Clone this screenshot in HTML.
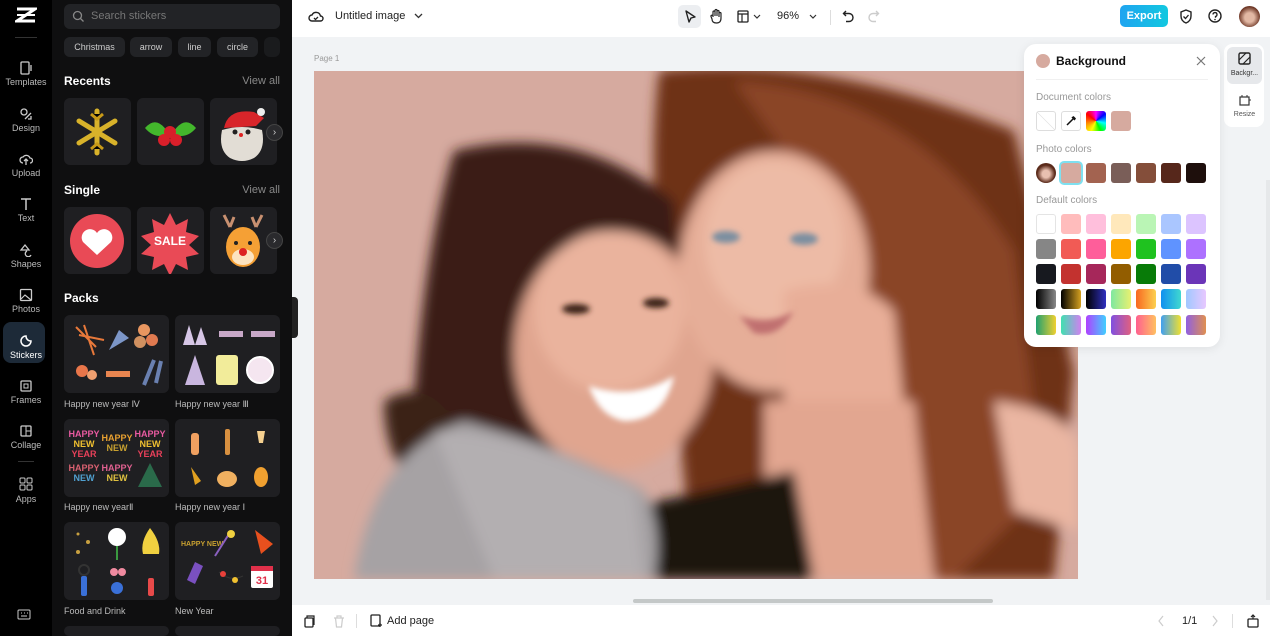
<!DOCTYPE html>
<html><head><meta charset="utf-8">
<style>
*{margin:0;padding:0;box-sizing:border-box}
html{width:1270px;height:636px;overflow:hidden}
body{width:1270px;height:636px;overflow:hidden;font-family:"Liberation Sans",sans-serif;background:#f1f3f5;position:relative}
.a{position:absolute}
#nav{left:0;top:0;width:52px;height:636px;background:#000;overflow:hidden}
.ni{position:absolute;left:0;width:52px;text-align:center;color:#bbb;font-size:9px}
.ni svg{display:block;margin:0 auto 2px}
#panel{left:52px;top:0;width:240px;height:636px;background:#0f0f10;color:#fff;overflow:hidden}
.chip{position:absolute;top:37px;height:20px;border-radius:6px;background:#222326;color:#ccc;font-size:9px;line-height:20px;text-align:center}
.h{position:absolute;font-size:12px;font-weight:bold;color:#fff}
.va{position:absolute;right:12px;font-size:11px;color:#888}
.card{position:absolute;width:67px;height:67px;border-radius:6px;background:#1f1f22;overflow:hidden}
.pk{position:absolute;width:105px;height:78px;border-radius:6px;background:#1f1f22;overflow:hidden}
.pl{position:absolute;font-size:9px;color:#bbb}
.arr{position:absolute;width:17px;height:17px;border-radius:50%;background:#2a2a2d;border:1px solid #444;color:#ccc;font-size:10px;line-height:15px;text-align:center}
#top{left:292px;top:0;width:978px;height:37px;background:#fff}
#bot{left:292px;top:605px;width:978px;height:31px;background:#fff}
.sw{position:absolute;width:20px;height:20px;border-radius:3px}
.lbl{position:absolute;left:12px;font-size:10px;color:#999}
</style></head><body>

<div id="nav" class="a">
  <svg class="a" style="left:15px;top:7px" width="22" height="16" viewBox="0 0 22 16"><path d="M2 2h18L2 14h18" stroke="#fff" stroke-width="3" fill="none"/><path d="M2 8h18" stroke="#fff" stroke-width="2"/></svg>
  <div class="a" style="left:15px;top:37px;width:22px;height:1px;background:#333"></div>
  <div class="ni" style="top:61px"><svg width="14" height="14"><rect x="2" y="1" width="8" height="12" rx="1" stroke="#ccc" fill="none" stroke-width="1.3"/><path d="M12 4v6" stroke="#ccc" stroke-width="1.3"/></svg>Templates</div>
  <div class="ni" style="top:107px"><svg width="14" height="14"><circle cx="5" cy="5" r="3" stroke="#ccc" fill="none" stroke-width="1.3"/><path d="M6 12l6-6M9 12h3V9" stroke="#ccc" fill="none" stroke-width="1.3"/></svg>Design</div>
  <div class="ni" style="top:152px"><svg width="14" height="14"><path d="M4 11a3 3 0 0 1 0-6 4 4 0 0 1 7 1 2.5 2.5 0 0 1 0 5M7 13V7M5 9l2-2 2 2" stroke="#ccc" fill="none" stroke-width="1.3"/></svg>Upload</div>
  <div class="ni" style="top:197px"><svg width="14" height="14"><path d="M2 2h10M7 2v11" stroke="#ccc" stroke-width="1.5"/></svg>Text</div>
  <div class="ni" style="top:243px"><svg width="14" height="14"><path d="M2 7l4-5 4 5zM8 8a3 3 0 1 0 4 4" stroke="#ccc" fill="none" stroke-width="1.3"/></svg>Shapes</div>
  <div class="ni" style="top:288px"><svg width="14" height="14"><rect x="1.5" y="1.5" width="11" height="11" rx="1" stroke="#ccc" fill="none" stroke-width="1.3"/><path d="M2 11l4-4 6 5" stroke="#ccc" fill="none" stroke-width="1.2"/></svg>Photos</div>
  <div class="a" style="left:3px;top:322px;width:42px;height:41px;border-radius:8px;background:#1d2a38"></div>
  <div class="ni" style="top:334px;color:#fff"><svg width="14" height="14"><path d="M12 7A5 5 0 1 1 7 2c0 3 2 5 5 5z" stroke="#fff" fill="none" stroke-width="1.5"/></svg>Stickers</div>
  <div class="ni" style="top:379px"><svg width="14" height="14"><rect x="2" y="2" width="10" height="10" rx="1" stroke="#ccc" fill="none" stroke-width="1.3"/><rect x="5" y="5" width="4" height="4" stroke="#ccc" fill="none"/></svg>Frames</div>
  <div class="ni" style="top:424px"><svg width="14" height="14"><rect x="2" y="2" width="10" height="10" rx="1" stroke="#ccc" fill="none" stroke-width="1.3"/><path d="M7 2v10M7 7h5" stroke="#ccc"/></svg>Collage</div>
  <div class="a" style="left:18px;top:461px;width:16px;height:1px;background:#333"></div>
  <div class="ni" style="top:476px"><svg width="16" height="16"><rect x="2" y="2" width="5" height="5" rx="1" stroke="#ccc" fill="none"/><rect x="9" y="2" width="5" height="5" rx="1" stroke="#ccc" fill="none"/><rect x="2" y="9" width="5" height="5" rx="1" stroke="#ccc" fill="none"/><rect x="9" y="9" width="5" height="5" rx="1" stroke="#ccc" fill="none"/></svg>Apps</div>
  <svg class="a" style="left:17px;top:609px" width="14" height="12"><rect x="1" y="1" width="12" height="9" rx="1" stroke="#ccc" fill="none"/><path d="M4 7h6M4 4h1M7 4h1M10 4h1" stroke="#ccc"/></svg>
</div>

<div id="panel" class="a">
  <div class="a" style="left:12px;top:4px;width:216px;height:25px;border-radius:6px;background:#222326"></div>
  <svg class="a" style="left:20px;top:10px" width="13" height="13"><circle cx="5.5" cy="5.5" r="4" stroke="#888" fill="none" stroke-width="1.3"/><path d="M8.5 8.5l3 3" stroke="#888" stroke-width="1.3"/></svg>
  <div class="a" style="left:39px;top:10px;font-size:11px;color:#777">Search stickers</div>
  <div class="chip" style="left:12px;width:61px">Christmas</div>
  <div class="chip" style="left:78px;width:42px">arrow</div>
  <div class="chip" style="left:126px;width:33px">line</div>
  <div class="chip" style="left:165px;width:41px">circle</div>
  <div class="chip" style="left:212px;width:16px;opacity:.6"></div>

  <div class="h" style="left:12px;top:74px">Recents</div><div class="va" style="top:75px">View all</div>
  <div class="card" style="left:12px;top:98px"><svg width="67" height="67"><g stroke="#d8b22a" stroke-width="5" stroke-linecap="round"><path d="M33 13v42M15 23l36 22M15 45l36-22"/></g><g stroke="#c89a18" stroke-width="3"><path d="M27 16l6 5 6-5M27 51l6-5 6 5"/></g></svg></div>
  <div class="card" style="left:85px;top:98px"><svg width="67" height="67"><path d="M8 30q12-14 24 6q-14 6-24-6zM59 30q-12-14-24 6q14 6 24-6z" fill="#43b72c"/><circle cx="33" cy="34" r="6" fill="#d91f2a"/><circle cx="27" cy="42" r="6" fill="#d91f2a"/><circle cx="39" cy="42" r="6" fill="#d91f2a"/></svg></div>
  <div class="card" style="left:158px;top:98px"><svg width="67" height="67"><path d="M14 30q4-20 30-16l10 6-8 8z" fill="#d8252a"/><circle cx="51" cy="14" r="4" fill="#eee"/><path d="M12 32q20-6 40 0q4 20-8 28q-12 6-24 0q-12-8-8-28z" fill="#e2ddd5"/><circle cx="25" cy="34" r="2.5" fill="#222"/><circle cx="38" cy="34" r="2.5" fill="#222"/><circle cx="31" cy="37" r="2" fill="#d22"/></svg></div>
  <div class="arr" style="left:214px;top:124px">›</div>

  <div class="h" style="left:12px;top:183px">Single</div><div class="va" style="top:184px">View all</div>
  <div class="card" style="left:12px;top:207px"><svg width="67" height="67"><circle cx="33" cy="34" r="27" fill="#e94a56"/><path d="M33 48l-14-13a8 8 0 0 1 14-9a8 8 0 0 1 14 9z" fill="#fff"/></svg></div>
  <div class="card" style="left:85px;top:207px"><svg width="67" height="67"><path d="M33 6l6 12 12-6-2 13 13 4-10 9 10 9-13 3 2 13-12-6-6 12-6-12-12 6 2-13-13-3 10-9-10-9 13-4-2-13 12 6z" fill="#e94a56"/><text x="33" y="38" font-size="12" font-weight="bold" fill="#fff" text-anchor="middle" font-family="Liberation Sans">SALE</text></svg></div>
  <div class="card" style="left:158px;top:207px"><svg width="67" height="67"><path d="M20 20l-6-12M20 20l4-10M46 20l6-12M46 20l-4-10" stroke="#c89070" stroke-width="3"/><ellipse cx="33" cy="40" rx="17" ry="20" fill="#f5a035"/><ellipse cx="33" cy="50" rx="11" ry="8" fill="#fde4c0"/><circle cx="33" cy="45" r="4" fill="#d22"/><circle cx="26" cy="36" r="2" fill="#222"/><circle cx="40" cy="36" r="2" fill="#222"/></svg></div>
  <div class="arr" style="left:214px;top:232px">›</div>

  <div class="h" style="left:12px;top:291px">Packs</div>
  <div class="pk" style="left:12px;top:315px"><svg width="105" height="78"><path d="M20 10l10 30M15 20l25 5M12 12l20 20" stroke="#e7783a" stroke-width="2"/><path d="M45 35l10-20 10 8z" fill="#7c96c8"/><circle cx="80" cy="15" r="6" fill="#e89660"/><circle cx="88" cy="25" r="6" fill="#e07a50"/><circle cx="76" cy="27" r="6" fill="#d09060"/><circle cx="18" cy="56" r="6" fill="#e9764a"/><circle cx="28" cy="60" r="5" fill="#f0a070"/><rect x="42" y="56" width="24" height="6" fill="#e88550"/><path d="M80 70l10-25M92 68l5-22" stroke="#6a80b0" stroke-width="4"/></svg></div>
  <div class="pk" style="left:123px;top:315px"><svg width="105" height="78"><path d="M8 30l6-20 6 20z" fill="#d6c6e6"/><path d="M20 30l6-18 6 18z" fill="#d6c6e6"/><rect x="44" y="16" width="24" height="6" fill="#c8a8c8"/><rect x="76" y="16" width="24" height="6" fill="#c8a8c8"/><path d="M10 70l10-30 10 30z" fill="#c9b6df"/><rect x="41" y="40" width="22" height="30" rx="3" fill="#f2ec9a"/><circle cx="85" cy="55" r="13" fill="#f5e6f0" stroke="#fff" stroke-width="2"/></svg></div>
  <div class="pl" style="left:12px;top:399px">Happy new year Ⅳ</div>
  <div class="pl" style="left:123px;top:399px">Happy new year Ⅲ</div>
  <div class="pk" style="left:12px;top:419px"><svg width="105" height="78"><g font-family="Liberation Sans" font-size="9" font-weight="bold" text-anchor="middle"><text x="20" y="18" fill="#e85aa0">HAPPY</text><text x="20" y="28" fill="#f0c030">NEW</text><text x="20" y="38" fill="#e8405a">YEAR</text><text x="53" y="22" fill="#e8a030">HAPPY</text><text x="53" y="32" fill="#c8a030">NEW</text><text x="86" y="18" fill="#e85aa0">HAPPY</text><text x="86" y="28" fill="#f0c030">NEW</text><text x="86" y="38" fill="#e8405a">YEAR</text><text x="20" y="52" fill="#d86070">HAPPY</text><text x="20" y="62" fill="#50a0d0">NEW</text><text x="53" y="52" fill="#e06090">HAPPY</text><text x="53" y="62" fill="#e0c040">NEW</text></g><path d="M86 44l12 24h-24z" fill="#2a6a4a"/></svg></div>
  <div class="pk" style="left:123px;top:419px"><svg width="105" height="78"><rect x="16" y="14" width="8" height="22" rx="3" fill="#f0a060"/><rect x="50" y="10" width="5" height="26" rx="2" fill="#d89040"/><path d="M82 12h8l-2 12h-4z" fill="#f5d090"/><path d="M16 48l10 14-6 4z" fill="#e0a020"/><ellipse cx="52" cy="60" rx="10" ry="8" fill="#f0b060"/><ellipse cx="86" cy="58" rx="7" ry="10" fill="#f0a030"/></svg></div>
  <div class="pl" style="left:12px;top:502px">Happy new yearⅡ</div>
  <div class="pl" style="left:123px;top:502px">Happy new year Ⅰ</div>
  <div class="pk" style="left:12px;top:522px"><svg width="105" height="78"><circle cx="14" cy="12" r="1.5" fill="#c8a040"/><circle cx="24" cy="20" r="2" fill="#c8a040"/><circle cx="14" cy="30" r="2" fill="#c8a040"/><circle cx="53" cy="15" r="9" fill="#fff"/><path d="M53 24v14" stroke="#3a9a40" stroke-width="2"/><path d="M86 6q-10 14-7 26h16q2-12-9-26z" fill="#f0d040"/><rect x="17" y="54" width="6" height="20" rx="2" fill="#3a70d8"/><circle cx="20" cy="48" r="5" fill="none" stroke="#333" stroke-width="2"/><circle cx="53" cy="66" r="6" fill="#3a70d8"/><circle cx="50" cy="50" r="4" fill="#f08aa0"/><circle cx="58" cy="50" r="4" fill="#f08aa0"/><rect x="84" y="56" width="6" height="18" rx="2" fill="#e84a4a"/></svg></div>
  <div class="pk" style="left:123px;top:522px"><svg width="105" height="78"><text x="6" y="24" font-size="7" font-weight="bold" fill="#c8a030" font-family="Liberation Sans">HAPPY NEW</text><path d="M40 34l14-22" stroke="#8a60c0" stroke-width="2"/><circle cx="56" cy="12" r="4" fill="#f0d040"/><path d="M80 8l18 14-12 10z" fill="#e8501e"/><path d="M12 58l8-18 8 4-8 18z" fill="#7a50c0"/><path d="M44 50q10 10 24 4" stroke="#333" fill="none"/><circle cx="48" cy="52" r="3" fill="#e8403a"/><circle cx="60" cy="58" r="3" fill="#f0c030"/><rect x="76" y="44" width="22" height="22" rx="2" fill="#fff"/><rect x="76" y="44" width="22" height="5" fill="#e0304a"/><text x="87" y="62" font-size="11" font-weight="bold" fill="#e0304a" text-anchor="middle" font-family="Liberation Sans">31</text></svg></div>
  <div class="pl" style="left:12px;top:606px">Food and Drink</div>
  <div class="pl" style="left:123px;top:606px">New Year</div>
  <div class="pk" style="left:12px;top:626px;height:10px"></div>
  <div class="pk" style="left:123px;top:626px;height:10px"></div>
</div>
<div class="a" style="left:292px;top:297px;width:6px;height:41px;background:#222;border-radius:0 4px 4px 0"></div>

<div id="top" class="a">
  <svg class="a" style="left:16px;top:9px" width="16" height="16"><path d="M4 12a3 3 0 0 1 0-6 4.5 4.5 0 0 1 8.5 1 2.5 2.5 0 0 1 0 5z" stroke="#222" fill="none" stroke-width="1.4"/><path d="M6 9l1.5 1.5L10 8" stroke="#222" fill="none" stroke-width="1.3"/></svg>
  <div class="a" style="left:43px;top:10px;font-size:11px;color:#222">Untitled image</div>
  <svg class="a" style="left:122px;top:13px" width="9" height="6"><path d="M1 1l3.5 3.5L8 1" stroke="#333" fill="none" stroke-width="1.3"/></svg>
  <div class="a" style="left:386px;top:5px;width:23px;height:23px;border-radius:5px;background:#eceef1"></div>
  <svg class="a" style="left:391px;top:9px" width="14" height="15"><path d="M3 2l9 6-4 1-2 4z" stroke="#222" fill="none" stroke-width="1.4" stroke-linejoin="round"/></svg>
  <svg class="a" style="left:417px;top:8px" width="14" height="16"><path d="M4 9V4a1 1 0 0 1 2 0v4V2.5a1 1 0 0 1 2 0V8V3.5a1 1 0 0 1 2 0V9V5.5a1 1 0 0 1 2 0V10q0 5-4.5 5T3 11L2 8.5a1 1 0 0 1 2-.5z" stroke="#222" fill="none" stroke-width="1.2"/></svg>
  <svg class="a" style="left:445px;top:10px" width="12" height="13"><rect x="1" y="1" width="10" height="11" rx="1" stroke="#222" fill="none" stroke-width="1.3"/><path d="M1 4h10M5 4v8" stroke="#222" stroke-width="1.2"/></svg>
  <svg class="a" style="left:461px;top:14px" width="8" height="5"><path d="M1 1l3 3 3-3" stroke="#333" fill="none" stroke-width="1.2"/></svg>
  <div class="a" style="left:485px;top:10px;font-size:11px;color:#222">96%</div>
  <svg class="a" style="left:517px;top:14px" width="8" height="5"><path d="M1 1l3 3 3-3" stroke="#333" fill="none" stroke-width="1.2"/></svg>
  <div class="a" style="left:538px;top:10px;width:1px;height:15px;background:#ddd"></div>
  <svg class="a" style="left:550px;top:9px" width="13" height="14"><path d="M4 2L1.5 4.5 4 7M2 4.5h5a4 4 0 0 1 0 8H4" stroke="#222" fill="none" stroke-width="1.4"/></svg>
  <svg class="a" style="left:575px;top:9px" width="13" height="14"><path d="M9 2l2.5 2.5L9 7M11 4.5H6a4 4 0 0 0 0 8h3" stroke="#ccc" fill="none" stroke-width="1.4"/></svg>
  <div class="a" style="left:828px;top:5px;width:48px;height:22px;border-radius:5px;background:linear-gradient(90deg,#1fa4f0,#12c8e0);color:#fff;font-size:11px;font-weight:bold;text-align:center;line-height:22px">Export</div>
  <svg class="a" style="left:887px;top:9px" width="14" height="15"><path d="M7 1l5 2v4q0 5-5 7q-5-2-5-7V3z" stroke="#222" fill="none" stroke-width="1.4"/><path d="M4.5 7.5l2 2 3-3.5" stroke="#222" fill="none" stroke-width="1.3"/></svg>
  <svg class="a" style="left:916px;top:9px" width="14" height="14"><circle cx="7" cy="7" r="6" stroke="#222" fill="none" stroke-width="1.4"/><path d="M5 5.5a2 2 0 1 1 2.5 2v1.3" stroke="#222" fill="none" stroke-width="1.3"/><circle cx="7" cy="10.5" r=".8" fill="#222"/></svg>
  <div class="a" style="left:947px;top:6px;width:21px;height:21px;border-radius:50%;background:radial-gradient(circle at 50% 55%,#e2b8a4 30%,#6a3322 70%)"></div>
</div>

<div class="a" style="left:314px;top:54px;font-size:8px;color:#999">Page 1</div>

<svg class="a" style="left:314px;top:71px" width="764" height="508" viewBox="0 0 764 508">
<defs><filter id="b" x="-20%" y="-20%" width="140%" height="140%"><feGaussianBlur stdDeviation="6"/></filter><filter id="b2"><feGaussianBlur stdDeviation="3"/></filter></defs>
<rect width="764" height="508" fill="#d6aa9f"/>
<g filter="url(#b)">
<path d="M345 0 Q500 -20 700 60 L760 300 L740 508 L380 508 L360 300 Q330 120 345 0z" fill="#6e3019"/>
<path d="M420 10 Q600 20 700 180 L730 420 L640 508 L500 508 Q560 300 520 150z" fill="#8a4426"/>
<path d="M140 80 Q260 50 360 130 L380 360 L200 400 L100 330 Q110 180 140 80z" fill="#3a1c14"/>
<path d="M70 330 Q120 300 150 370 L120 430 Q70 400 70 330z" fill="#3a2218"/>
<ellipse cx="300" cy="280" rx="100" ry="120" fill="#e0a58f"/>
<ellipse cx="295" cy="240" rx="75" ry="80" fill="#eab39d"/>
<ellipse cx="460" cy="200" rx="95" ry="120" fill="#e6ae98"/>
<ellipse cx="460" cy="170" rx="70" ry="80" fill="#edbba6"/>
<path d="M470 220 Q540 200 580 240 L590 340 L520 380 L470 340z" fill="#e8ae98"/>
<path d="M450 330 L600 330 L620 508 L450 508z" fill="#e2a690"/>
<path d="M680 330 Q760 340 764 380 L764 460 L700 440z" fill="#eab6a2"/>
<path d="M300 440 L480 400 L500 508 L310 508z" fill="#1a1210"/>
<path d="M40 508 Q60 380 150 350 Q260 380 330 420 Q350 460 340 508z" fill="#a6a2a4"/>
<path d="M120 360 Q200 360 320 420 L330 508 L180 508z" fill="#b3afb1"/>
</g>
<g filter="url(#b2)">
<ellipse cx="262" cy="238" rx="14" ry="5" fill="#3a2018"/>
<ellipse cx="342" cy="232" rx="13" ry="5" fill="#3a2018"/>
<ellipse cx="412" cy="166" rx="14" ry="6" fill="#7a8ea0"/>
<ellipse cx="490" cy="168" rx="14" ry="6" fill="#7a8ea0"/>
<path d="M275 315 Q320 330 360 305 Q350 350 310 350 Q285 345 275 315z" fill="#fff"/>
<path d="M425 245 Q455 255 480 240 Q465 268 440 262z" fill="#c07070"/>
</g>
</svg>

<div class="a" style="left:633px;top:599px;width:360px;height:4px;border-radius:2px;background:#c4c8c8"></div>
<div class="a" style="left:1266px;top:180px;width:4px;height:420px;background:#e6e8ea"></div>

<div class="a" style="left:1224px;top:44px;width:40px;height:83px;border-radius:8px;background:#fff"></div>
<div class="a" style="left:1227px;top:47px;width:35px;height:37px;border-radius:6px;background:#e6e8eb"></div>
<svg class="a" style="left:1238px;top:52px" width="13" height="13"><rect x="1" y="1" width="11" height="11" rx="1.5" stroke="#222" fill="none" stroke-width="1.4"/><path d="M1 8l7-7M5 12l7-7" stroke="#222" stroke-width="1.2"/></svg>
<div class="a" style="left:1227px;top:70px;width:35px;text-align:center;font-size:7px;color:#333">Backgr...</div>
<svg class="a" style="left:1238px;top:94px" width="13" height="13"><rect x="2" y="3" width="9" height="8" stroke="#333" fill="none" stroke-width="1.2"/><path d="M4 1v2M9 1v2M11 6h2" stroke="#333"/></svg>
<div class="a" style="left:1227px;top:111px;width:35px;text-align:center;font-size:7px;color:#555">Resize</div>

<div class="a" style="left:1024px;top:44px;width:196px;height:303px;border-radius:12px;background:#fff;box-shadow:0 2px 10px rgba(0,0,0,.08)">
  <div class="a" style="left:12px;top:10px;width:14px;height:14px;border-radius:50%;background:#d6aa9f"></div>
  <div class="a" style="left:32px;top:10px;font-size:12px;font-weight:bold;color:#111">Background</div>
  <svg class="a" style="left:172px;top:12px" width="10" height="10"><path d="M1 1l8 8M9 1l-8 8" stroke="#777" stroke-width="1.2"/></svg>
  <div class="a" style="left:12px;top:35px;width:172px;height:1px;background:#f0f0f0"></div>
  <div class="lbl" style="top:48px">Document colors</div>
  <div class="sw" style="left:12px;top:67px;border:1px solid #ddd;background:linear-gradient(45deg,#fff 48%,#ddd 50%,#fff 52%)"></div>
  <div class="sw" style="left:37px;top:67px;border:1px solid #ddd;background:#fff"></div>
  <svg class="a" style="left:41px;top:71px" width="12" height="12"><path d="M2 10l6-6M7 2l3 3M8 1.5l2.5 2.5" stroke="#111" stroke-width="1.5"/></svg>
  <div class="sw" style="left:62px;top:67px;background:conic-gradient(#f0f,#00f,#0ff,#0f0,#ff0,#f80,#f00,#f0f)"></div>
  <div class="sw" style="left:87px;top:67px;background:#d6aa9f"></div>
  <div class="lbl" style="top:100px">Photo colors</div>
  <div class="sw" style="left:12px;top:119px;border-radius:50%;background:radial-gradient(circle at 50% 55%,#e8c0b0 25%,#5a2a1a 60%)"></div>
  <div class="sw" style="left:37px;top:119px;background:#d6aa9f;box-shadow:0 0 0 2px #7ee0f0"></div>
  <div class="sw" style="left:62px;top:119px;background:#a36350"></div>
  <div class="sw" style="left:87px;top:119px;background:#7a5e58"></div>
  <div class="sw" style="left:112px;top:119px;background:#844e3a"></div>
  <div class="sw" style="left:137px;top:119px;background:#56271b"></div>
  <div class="sw" style="left:162px;top:119px;background:#1e0f0c"></div>
  <div class="lbl" style="top:151px">Default colors</div>
  <div class="sw" style="left:12px;top:170px;background:#fff;border:1px solid #e4e4e4"></div>
  <div class="sw" style="left:37px;top:170px;background:#ffbcbc"></div>
  <div class="sw" style="left:62px;top:170px;background:#ffbfdc"></div>
  <div class="sw" style="left:87px;top:170px;background:#ffe8bb"></div>
  <div class="sw" style="left:112px;top:170px;background:#baf5b5"></div>
  <div class="sw" style="left:137px;top:170px;background:#aac6ff"></div>
  <div class="sw" style="left:162px;top:170px;background:#dcc4ff"></div>
  <div class="sw" style="left:12px;top:195px;background:#868686"></div>
  <div class="sw" style="left:37px;top:195px;background:#f15b55"></div>
  <div class="sw" style="left:62px;top:195px;background:#fe5e9a"></div>
  <div class="sw" style="left:87px;top:195px;background:#fca500"></div>
  <div class="sw" style="left:112px;top:195px;background:#1fc21f"></div>
  <div class="sw" style="left:137px;top:195px;background:#5f93ff"></div>
  <div class="sw" style="left:162px;top:195px;background:#ad71ff"></div>
  <div class="sw" style="left:12px;top:220px;background:#17191f"></div>
  <div class="sw" style="left:37px;top:220px;background:#c3322f"></div>
  <div class="sw" style="left:62px;top:220px;background:#a6275a"></div>
  <div class="sw" style="left:87px;top:220px;background:#925d00"></div>
  <div class="sw" style="left:112px;top:220px;background:#087b08"></div>
  <div class="sw" style="left:137px;top:220px;background:#214da8"></div>
  <div class="sw" style="left:162px;top:220px;background:#6b35b8"></div>
  <div class="sw" style="left:12px;top:245px;background:linear-gradient(90deg,#000,#888)"></div>
  <div class="sw" style="left:37px;top:245px;background:linear-gradient(90deg,#000,#d4a020)"></div>
  <div class="sw" style="left:62px;top:245px;background:linear-gradient(90deg,#000,#3030c0)"></div>
  <div class="sw" style="left:87px;top:245px;background:linear-gradient(90deg,#7fe8a0,#e8f070)"></div>
  <div class="sw" style="left:112px;top:245px;background:linear-gradient(90deg,#f86820,#fcd050)"></div>
  <div class="sw" style="left:137px;top:245px;background:linear-gradient(90deg,#1090f0,#40d8d0)"></div>
  <div class="sw" style="left:162px;top:245px;background:linear-gradient(90deg,#a0c8ff,#e8c8ff)"></div>
  <div class="sw" style="left:12px;top:271px;background:linear-gradient(90deg,#20a070,#f0d030)"></div>
  <div class="sw" style="left:37px;top:271px;background:linear-gradient(90deg,#40e0b0,#d080f0)"></div>
  <div class="sw" style="left:62px;top:271px;background:linear-gradient(90deg,#b040ff,#40d0ff)"></div>
  <div class="sw" style="left:87px;top:271px;background:linear-gradient(90deg,#8050e0,#e06080)"></div>
  <div class="sw" style="left:112px;top:271px;background:linear-gradient(90deg,#ff6090,#ffc060)"></div>
  <div class="sw" style="left:137px;top:271px;background:linear-gradient(90deg,#40a0f0,#f0e030)"></div>
  <div class="sw" style="left:162px;top:271px;background:linear-gradient(90deg,#9060e0,#e09050)"></div>
</div>

<div id="bot" class="a">
  <svg class="a" style="left:12px;top:10px" width="12" height="13"><rect x="1" y="3" width="8" height="9" rx="1" stroke="#222" fill="none" stroke-width="1.3"/><path d="M3 3V1h7v9" stroke="#222" fill="none" stroke-width="1.2"/></svg>
  <svg class="a" style="left:41px;top:10px" width="12" height="13"><path d="M1 3h10M4 3V1h4v2M2.5 3l1 9h5l1-9" stroke="#ccc" fill="none" stroke-width="1.2"/></svg>
  <div class="a" style="left:64px;top:9px;width:1px;height:14px;background:#ddd"></div>
  <svg class="a" style="left:78px;top:9px" width="13" height="14"><rect x="1" y="1" width="9" height="11" rx="1" stroke="#222" fill="none" stroke-width="1.3"/><path d="M10 9v4M8 11h4" stroke="#222" stroke-width="1.3"/></svg>
  <div class="a" style="left:95px;top:10px;font-size:11px;color:#222">Add page</div>
  <svg class="a" style="left:865px;top:10px" width="8" height="12"><path d="M6 1L2 6l4 5" stroke="#ccc" fill="none" stroke-width="1.2"/></svg>
  <div class="a" style="left:890px;top:10px;font-size:11px;color:#222">1/1</div>
  <svg class="a" style="left:919px;top:10px" width="8" height="12"><path d="M2 1l4 5-4 5" stroke="#ccc" fill="none" stroke-width="1.2"/></svg>
  <div class="a" style="left:940px;top:9px;width:1px;height:14px;background:#ddd"></div>
  <svg class="a" style="left:955px;top:8px" width="12" height="15"><rect x="1" y="6" width="10" height="8" rx="1" stroke="#222" fill="none" stroke-width="1.3"/><path d="M6 6V2M4 4l2-2 2 2" stroke="#222" fill="none" stroke-width="1.2"/></svg>
</div>
</body></html>
